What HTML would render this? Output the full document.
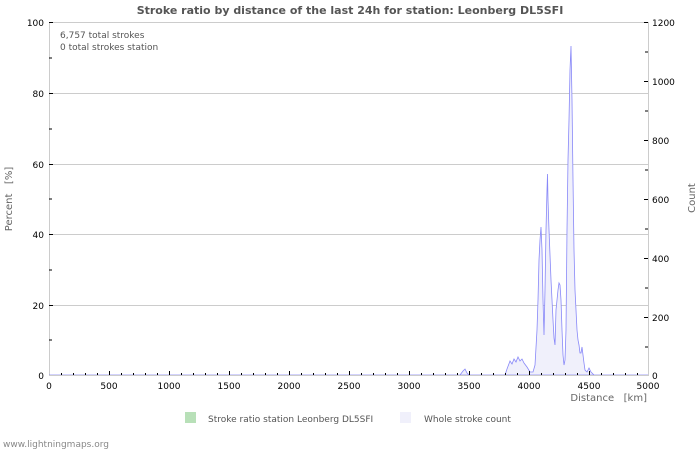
<!DOCTYPE html>
<html><head><meta charset="utf-8"><style>
html,body{margin:0;padding:0;background:#fff;width:700px;height:450px;overflow:hidden}
svg{display:block;font-family:"DejaVu Sans","Liberation Sans",sans-serif}
text{white-space:pre}
</style></head><body>
<svg width="700" height="450" viewBox="0 0 700 450" xmlns="http://www.w3.org/2000/svg">
<text x="350" y="14" text-anchor="middle" font-size="11" font-weight="bold" fill="#555">Stroke ratio by distance of the last 24h for station: Leonberg DL5SFI</text>
<rect x="49.5" y="22.5" width="599" height="353" fill="none" stroke="#ccc"/>
<g stroke="#ccc" stroke-width="1">
<line x1="49" y1="93.5" x2="648" y2="93.5"/>
<line x1="49" y1="164.5" x2="648" y2="164.5"/>
<line x1="49" y1="234.5" x2="648" y2="234.5"/>
<line x1="49" y1="305.5" x2="648" y2="305.5"/>
</g>
<polygon fill="#f0f0fb" stroke="#8888f8" stroke-width="0.8" points="49,375 460,375 463,371 465,369 467,373 469,375 505,375 507,369 510,361 512,364 514,359 516,362 518,357 520,361 522,359 524,363 527,367 530,372 533,372 535,365 537,330 538,300 539,260 540,240 541,227 542,250 543,300 544,335 545,290 546,230 547,190 547.5,174 548,200 549,230 550,255 551,280 552,300 553,320 554,338 555,345 556,310 557,300 558,290 559,283 560,285 561,300 562,330 563,355 564,365 565,360 566,330 567,230 568,160 569,120 570,70 571,46 572,100 573,180 574,250 575,290 576,310 577,330 578,340 579,345 580,353 581,353 582,347 583,355 584,363 585,370 587,372 589,368 591,372 594,375 648,375"/>
<line x1="49" y1="375.5" x2="648" y2="375.5" stroke="#ccc"/>
<g stroke="#000" stroke-width="1">
<path d="M49,22.5h4M49,58h3M49,93.5h4M49,129h3M49,164.5h4M49,199h3M49,234.5h4M49,270h3M49,305.5h4M49,340h3"/>
<path d="M648,22.5h-4M648,52h-3M648,81.5h-4M648,111h-3M648,140.5h-4M648,170h-3M648,199.5h-4M648,229h-3M648,258.5h-4M648,288h-3M648,317.5h-4M648,347h-3"/>
<path d="M61.5,375v-2M73.5,375v-2M85.5,375v-2M97.5,375v-2M109.5,375v-4M121.5,375v-2M133.5,375v-2M145.5,375v-2M157.5,375v-2M169.5,375v-4M181.5,375v-2M193.5,375v-2M205.5,375v-2M217.5,375v-2M229.5,375v-4M241.5,375v-2M253.5,375v-2M265.5,375v-2M277.5,375v-2M289.5,375v-4M301.5,375v-2M313.5,375v-2M325.5,375v-2M337.5,375v-2M349.5,375v-4M361.5,375v-2M373.5,375v-2M385.5,375v-2M397.5,375v-2M409.5,375v-4M421.5,375v-2M433.5,375v-2M445.5,375v-2M457.5,375v-2M469.5,375v-4M481.5,375v-2M493.5,375v-2M505.5,375v-2M517.5,375v-2M529.5,375v-4M541.5,375v-2M553.5,375v-2M565.5,375v-2M577.5,375v-2M589.5,375v-4M601.5,375v-2M613.5,375v-2M625.5,375v-2M637.5,375v-2"/>
</g>
<g font-size="9" fill="#000">
<text x="44" y="26" text-anchor="end">100</text>
<text x="44" y="97" text-anchor="end">80</text>
<text x="44" y="168" text-anchor="end">60</text>
<text x="44" y="238" text-anchor="end">40</text>
<text x="44" y="309" text-anchor="end">20</text>
<text x="44" y="379" text-anchor="end">0</text>
<text x="652" y="26">1200</text>
<text x="652" y="85">1000</text>
<text x="652" y="144">800</text>
<text x="652" y="203">600</text>
<text x="652" y="262">400</text>
<text x="652" y="321">200</text>
<text x="652" y="379">0</text>
<g text-anchor="middle">
<text x="49" y="389">0</text><text x="109" y="389">500</text><text x="169" y="389">1000</text><text x="229" y="389">1500</text><text x="289" y="389">2000</text><text x="349" y="389">2500</text><text x="409" y="389">3000</text><text x="469" y="389">3500</text><text x="529" y="389">4000</text><text x="589" y="389">4500</text><text x="648" y="389">5000</text>
</g>
</g>
<g font-size="9" fill="#555">
<text x="60" y="38">6,757 total strokes</text>
<text x="60" y="50">0 total strokes station</text>
</g>
<g font-size="10" fill="#666">
<text x="647" y="401" text-anchor="end">Distance   [km]</text>
<text transform="translate(12,199) rotate(-90)" text-anchor="middle">Percent   [%]</text>
<text transform="translate(695,198) rotate(-90)" text-anchor="middle">Count</text>
</g>
<rect x="185" y="412" width="11" height="11" fill="#b8e0b8"/>
<rect x="400" y="412" width="11" height="11" fill="#f0f0fb"/>
<g font-size="9" fill="#555">
<text x="208" y="422">Stroke ratio station Leonberg DL5SFI</text>
<text x="424" y="422">Whole stroke count</text>
<text x="3" y="447" fill="#888">www.lightningmaps.org</text>
</g>
</svg>
</body></html>
